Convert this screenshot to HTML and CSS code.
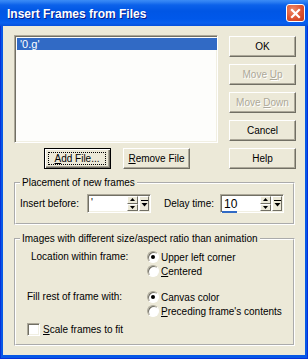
FILE: index.html
```html
<!DOCTYPE html>
<html lang="en">
<head>
    <meta charset="UTF-8">
    <title>Insert Frames from Files</title>
    <link rel="stylesheet" href="styles.css">
</head>
<body>
    <div class="window">
        <div class="titlebar">
            <span class="title">Insert Frames from Files</span>
            <span class="close">
                <svg width="17" height="17" viewBox="0 0 17 17"><path d="M5 5 L12 12 M12 5 L5 12" stroke="#fff" stroke-width="2.2" stroke-linecap="square"/></svg>
            </span>
        </div>

        <div class="client">
            <div class="top">
                <div class="left">
                    <div class="listbox">
                        <div class="item selected">'0.g'</div>
                    </div>
                    <div class="file-buttons">
                        <button class="btn default"><span class="focus-rect"><u>A</u>dd File...</span></button>
                        <button class="btn"><u>R</u>emove File</button>
                    </div>
                </div>
                <div class="side">
                    <button class="btn">OK</button>
                    <button class="btn" disabled>Move <u>U</u>p</button>
                    <button class="btn" disabled>Move <u>D</u>own</button>
                    <button class="btn">Cancel</button>
                    <button class="btn">Help</button>
                </div>
            </div>

            <!-- Placement -->
            <fieldset class="group placement">
                <legend>Placement of new frames</legend>
                <div class="placement-row">
                    <label class="insert-label">Insert before:</label>
                    <div class="spin-edit">
                        <span class="spin-text">'</span>
                        <span class="spin-arrows">
                            <span class="arrow-btn"><svg width="5" height="3" viewBox="0 0 5 3"><path d="M0 3H5L2.5 0Z"/></svg></span>
                            <span class="arrow-btn"><svg width="5" height="3" viewBox="0 0 5 3"><path d="M0 0H5L2.5 3Z"/></svg></span>
                        </span>
                        <span class="end-btn"><svg width="7" height="7" viewBox="0 0 7 7"><path d="M0 0H7V1H0Z M0.5 3H6.5L3.5 6.5Z"/></svg></span>
                    </div>
                    <label class="delay-label">Delay time:</label>
                    <div class="spin-edit">
                        <span class="spin-text big focused">10</span>
                        <span class="spin-arrows">
                            <span class="arrow-btn"><svg width="5" height="3" viewBox="0 0 5 3"><path d="M0 3H5L2.5 0Z"/></svg></span>
                            <span class="arrow-btn"><svg width="5" height="3" viewBox="0 0 5 3"><path d="M0 0H5L2.5 3Z"/></svg></span>
                        </span>
                        <span class="end-btn"><svg width="7" height="7" viewBox="0 0 7 7"><path d="M0 0H7V1H0Z M0.5 3H6.5L3.5 6.5Z"/></svg></span>
                    </div>
                </div>
            </fieldset>

            <!-- Different size -->
            <fieldset class="group images">
                <legend>Images with different size/aspect ratio than animation</legend>
                <div class="option-row">
                    <div class="option-label location">Location within frame:</div>
                    <div class="radios">
                        <div class="radio-row"><span class="radio checked"></span>Upper left corner</div>
                        <div class="radio-row"><span class="radio"></span><span><u>C</u>entered</span></div>
                    </div>
                </div>
                <div class="option-row">
                    <div class="option-label">Fill rest of frame with:</div>
                    <div class="radios">
                        <div class="radio-row"><span class="radio checked"></span>Canvas color</div>
                        <div class="radio-row"><span class="radio"></span><span><u>P</u>receding frame's contents</span></div>
                    </div>
                </div>
                <div class="check-row">
                    <span class="checkbox"></span><span><u>S</u>cale frames to fit</span>
                </div>
            </fieldset>
        </div>
    </div>
</body>
</html>
```

FILE: styles.css
```css
:root {
    --face: #ece9d8;
    --shadow: #aca899;
    --dark: #716f64;
    --select: #316ac5;
}
body {
    margin: 0;
    font-family: "Liberation Sans", Arial, sans-serif;
    font-size: 10px;
    color: #000;
}
.window {
    width: 308px;
    height: 359px;
    display: flex;
    flex-direction: column;
    background: #0758e6;
    box-shadow: inset 1px 0 #0831d9, inset -1px 0 #0831d9, inset 0 -1px #0831d9;
    overflow: hidden;
}
.titlebar {
    height: 26px;
    flex: none;
    display: flex;
    justify-content: space-between;
    align-items: flex-start;
    padding: 0 3px 0 7px;
    background: linear-gradient(to bottom, #3b8cf6 0px, #2c7ef2 2px, #0c62ea 5px, #0056e5 11px, #0058ea 19px, #0a60ee 23px, #0550dc 26px);
}
.title {
    color: #fff;
    font-weight: bold;
    font-size: 12px;
    line-height: 14px;
    margin-top: 7px;
    text-shadow: 1px 1px #0a1c8a;
}
.close {
    width: 19px;
    height: 18px;
    margin-top: 4px;
    box-sizing: border-box;
    border: 1px solid #fff;
    border-radius: 3px;
    background: radial-gradient(circle at 35% 30%, #ee8a6a, #dd5331 55%, #c23a1c);
    display: flex;
    align-items: center;
    justify-content: center;
}
.client {
    flex: 1;
    margin: 0 3px 4px 3px;
    background: var(--face);
}

/* top part */
.top {
    display: flex;
    padding: 9px 0 0 11px;
}
.left {
    width: 204px;
}
.listbox {
    height: 108px;
    box-sizing: border-box;
    background: #fdfdfb;
    border: 1px solid;
    border-color: var(--shadow) #fff #fff var(--shadow);
    box-shadow: inset 1px 1px var(--dark), inset -1px -1px #f1efe2;
    padding: 2px 0 0 2px;
}
.item {
    height: 12px;
    line-height: 12px;
    font-size: 11px;
    padding-left: 3px;
}
.item.selected {
    background: var(--select);
    color: #fff;
}
.file-buttons {
    display: flex;
    gap: 12px;
    padding: 5px 0 0 30px;
}
.side {
    display: flex;
    flex-direction: column;
    gap: 7px;
    margin: 1px 0 0 11px;
}
.btn {
    width: 67px;
    height: 21px;
    box-sizing: border-box;
    padding: 0;
    font-family: inherit;
    font-size: 10px;
    color: #000;
    background: var(--face);
    border: 1px solid;
    border-color: #fff var(--dark) var(--dark) #fff;
    box-shadow: inset -1px -1px var(--shadow);
}
.btn:disabled {
    color: var(--shadow);
    text-shadow: 1px 1px #fff;
}
.btn.default {
    border: 1px solid #000;
    box-shadow: inset 1px 1px #fff, inset -1px -1px var(--dark), inset -2px -2px var(--shadow);
    padding: 3px 4px 3px 3px;
}
.focus-rect {
    display: block;
    height: 13px;
    line-height: 11px;
    box-sizing: border-box;
    border: 1px dotted #000;
}

/* group boxes */
.group {
    width: 281px;
    box-sizing: border-box;
    margin: 0 0 0 11px;
    border: 2px groove #fff;
    padding: 5px 4px 0 4px;
}
.group legend {
    padding: 0 2px;
    line-height: 12px;
    margin-left: 0;
}
.placement {
    margin-top: 8px;
    padding-bottom: 10px;
}
.images {
    margin-top: 8px;
    padding-bottom: 8px;
}
.placement-row {
    display: flex;
    align-items: center;
}
.insert-label {
    width: 67px;
}
.delay-label {
    width: 56px;
    margin-left: 13px;
}
.spin-edit {
    width: 64px;
    height: 19px;
    box-sizing: border-box;
    display: flex;
    background: #fff;
    border: 1px solid;
    border-color: var(--shadow) #fff #fff var(--shadow);
    box-shadow: inset 1px 1px var(--dark), inset -1px -1px #f1efe2;
    padding: 1px 1px 1px 1px;
}
.spin-text {
    flex: 1;
    position: relative;
    padding: 0 0 0 2px;
    line-height: 14px;
}
.spin-text.big {
    font-size: 12px;
    line-height: 16px;
}
.spin-text.focused::after {
    content: "";
    position: absolute;
    left: 0;
    bottom: -2px;
    width: 15px;
    height: 2px;
    background: var(--select);
}
.spin-arrows {
    width: 11px;
    display: flex;
    flex-direction: column;
}
.arrow-btn, .end-btn {
    flex: 1;
    display: flex;
    align-items: center;
    justify-content: center;
    background: var(--face);
    box-sizing: border-box;
    border: 1px solid;
    border-color: #fff var(--dark) var(--dark) #fff;
}
.end-btn {
    flex: none;
    width: 10px;
    margin-left: 1px;
}

.option-row {
    display: flex;
    margin-bottom: 12px;
}
.option-label {
    width: 127px;
    box-sizing: border-box;
    padding-left: 7px;
    line-height: 14px;
}
.option-label.location {
    padding-left: 11px;
}
.radio-row, .check-row {
    display: flex;
    align-items: center;
    height: 14px;
}
.radio {
    width: 12px;
    height: 12px;
    box-sizing: border-box;
    border-radius: 50%;
    margin-right: 2px;
    background: #fff;
    border: 1px solid;
    border-color: var(--shadow) #fff #fff var(--shadow);
    box-shadow: inset 1px 1px var(--dark);
    display: flex;
    align-items: center;
    justify-content: center;
}
.radio.checked::after {
    content: "";
    width: 4px;
    height: 4px;
    border-radius: 50%;
    background: #000;
}
.check-row {
    margin: -8px 0 0 7px;
}
.checkbox {
    width: 13px;
    height: 13px;
    box-sizing: border-box;
    margin-right: 3px;
    background: #fff;
    border: 1px solid;
    border-color: var(--shadow) #fff #fff var(--shadow);
    box-shadow: inset 1px 1px var(--dark), inset -1px -1px #f1efe2;
}
```
